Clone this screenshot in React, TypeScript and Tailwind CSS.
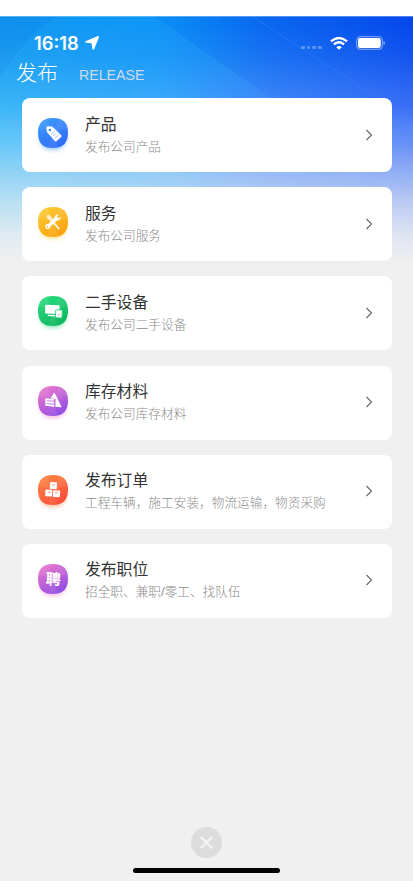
import type { ReactNode } from 'react'

// ── Icon badge: rounded blob with gradient and soft shadow ────────────────────
type BadgeProps = {
  id: string
  from: string
  to: string
  children: ReactNode
}

function Badge({ id, from, to, children }: BadgeProps) {
  return (
    <svg width="46" height="46" viewBox="-8 -6 46 46" className="-m-2 mr-0 shrink-0" aria-hidden>
      <defs>
        <linearGradient id={id} x1="0.2" y1="0" x2="0.8" y2="1">
          <stop offset="0" stopColor={from} />
          <stop offset="1" stopColor={to} />
        </linearGradient>
        <filter id={`${id}-blur`} x="-30%" y="-30%" width="160%" height="160%">
          <feGaussianBlur stdDeviation="2.2" />
        </filter>
      </defs>
      <rect x="2" y="5" width="26" height="27" rx="11" fill={from} opacity="0.5" filter={`url(#${id}-blur)`} />
      <path
        d="M15 0C25 0 30 4.500 30 14.500C30 25 25 30 15 30C5 30 0 25.500 0 14.500C0 4.500 5.500 0 15 0Z"
        fill={`url(#${id})`}
      />
      <path d="M15 15L0.500 10C1.500 5 4 2 9 .6ZM15 15L21 .6C26 1.500 29 4.500 29.800 10ZM15 15L20 29.600C17 30.100 13 30.100 10 29.600Z" fill="#fff" opacity="0.07" />
      {children}
    </svg>
  )
}

const ITEMS = [
  {
    title: '产品',
    desc: '发布公司产品',
    from: '#3d9bfd',
    to: '#2f68f8',
    glyph: (
      <>
        <path d="M9.200 8.300L14.200 8.500L23.500 17.600Q24 18.200 23.400 18.800L18.200 23.400Q17.500 23.900 17 23.200L8.900 13.900L8.400 9.200Z" fill="#fff" />
        <circle cx="11.900" cy="11.900" r="1.250" fill="#3882fa" />
        <path d="M13 16.200L16.800 12.800M14.900 18.200L18.700 14.800M16.800 20.200L20.600 16.800" stroke="#6fa2fb" strokeWidth=".9" strokeDasharray="1.200 .6" />
      </>
    ),
  },
  {
    title: '服务',
    desc: '发布公司服务',
    from: '#fdcd36',
    to: '#fd9e0a',
    glyph: (
      <>
        <path d="M10.700 9.800L13.600 13" stroke="#fff" strokeOpacity=".7" strokeWidth="4" strokeLinecap="round" />
        <path d="M15 15L20.700 21.500" stroke="#fff" strokeWidth="1.700" strokeLinecap="round" />
        <path d="M10 19.500L18.500 11.500" stroke="#fff" strokeWidth="3.400" strokeLinecap="round" />
        <path d="M20.400 7.800A3.600 3.600 0 0 0 16.500 12A3.600 3.600 0 0 0 22.800 10.200L20.300 12L18.300 10.200Z" fill="#fff" stroke="#fff" strokeWidth=".5" />
        <circle cx="9.800" cy="19.600" r="2.500" fill="#fff" />
        <circle cx="9.600" cy="19.800" r=".9" fill="#fdb320" />
      </>
    ),
  },
  {
    title: '二手设备',
    desc: '发布公司二手设备',
    from: '#2bdc80',
    to: '#0db35c',
    glyph: (
      <>
        <path d="M8.200 8.700L20.800 9.200Q21.700 9.300 21.600 10.200L21.200 17.900L8 17.400Q6.900 17.300 7 16.400L7.200 9.600Q7.300 8.700 8.200 8.700Z" fill="#fff" />
        <path d="M10.400 19.400L16.600 19.800" stroke="#fff" strokeWidth="1.400" strokeLinecap="round" />
        <rect x="17.500" y="13.900" width="6.700" height="8" rx="1" fill="#fff" stroke="#1fcb70" strokeWidth=".8" transform="rotate(3 21 18)" />
        <path d="M20 19.500L22 17.400" stroke="#1fcb70" strokeWidth=".7" />
      </>
    ),
  },
  {
    title: '库存材料',
    desc: '发布公司库存材料',
    from: '#ed79cb',
    to: '#8b4be6',
    glyph: (
      <>
        <path d="M15.500 7.300Q16.300 6.400 17 7.500L23.400 20.400Q23.700 21.300 22.800 21.200L17.400 20.700L17.500 13L12.700 12.200Z" fill="#fff" />
        <path d="M7.300 13.200L16 13.900M7.300 16L16.300 16.800M7.300 18.800L16.300 19.700" stroke="#fff" strokeWidth="1.900" />
        <path d="M7.300 14.600L9 14.200M7.300 17.400L9 17" stroke="#fff" strokeWidth="1" />
      </>
    ),
  },
  {
    title: '发布订单',
    desc: '工程车辆，施工安装，物流运输，物资采购',
    from: '#fd8645',
    to: '#fa4937',
    glyph: (
      <>
        <rect x="12" y="7.200" width="6.900" height="6.800" rx=".8" fill="#fff" transform="rotate(3 15 10)" />
        <rect x="7.300" y="14.700" width="6.900" height="6.800" rx=".8" fill="#fff" transform="rotate(3 11 18)" />
        <rect x="15.100" y="15.300" width="6.900" height="6.800" rx=".8" fill="#fff" transform="rotate(3 18 18)" />
        <path d="M14.200 9.800H17M9.500 17.300H12.200M17 17.800H19.800" stroke="#fc6740" strokeWidth=".7" />
      </>
    ),
  },
  {
    title: '发布职位',
    desc: '招全职、兼职/零工、找队伍',
    from: '#ed79cb',
    to: '#8b4be6',
    glyph: (
      <text x="15.200" y="20.600" textAnchor="middle" fontSize="15" fontWeight="700" fill="#fff" transform="rotate(3 15 15)">
        聘
      </text>
    ),
  },
]

// ── Blue header artwork fading into the page ──────────────────────────────────
function Backdrop() {
  return (
    <svg className="absolute inset-x-0 top-0 -z-10 h-[247px] w-full" viewBox="0 0 413 247" preserveAspectRatio="none" aria-hidden>
      <defs>
        <linearGradient id="sky" gradientUnits="userSpaceOnUse" x1="0" y1="60" x2="400" y2="-40">
          <stop offset="0" stopColor="#1090ec" />
          <stop offset="0.38" stopColor="#0a92f6" />
          <stop offset="0.65" stopColor="#0a69f0" />
          <stop offset="1" stopColor="#0748ed" />
        </linearGradient>
        <linearGradient id="tint" x1="0" y1="0" x2="1" y2="0">
          <stop offset="0" stopColor="#4abffa" />
          <stop offset="0.4" stopColor="#4db0fc" />
          <stop offset="0.65" stopColor="#5590fb" />
          <stop offset="1" stopColor="#4a7cf8" />
        </linearGradient>
        <linearGradient id="rise" x1="0" y1="0" x2="0" y2="1">
          <stop offset="0.03" stopColor="#fff" stopOpacity="0" />
          <stop offset="0.16" stopColor="#fff" stopOpacity="0.2" />
          <stop offset="0.33" stopColor="#fff" stopOpacity="0.65" />
          <stop offset="0.48" stopColor="#fff" />
        </linearGradient>
        <mask id="lower">
          <rect width="413" height="247" fill="url(#rise)" />
        </mask>
        <linearGradient id="haze" x1="0" y1="0" x2="0" y2="1">
          <stop offset="0.36" stopColor="#f0f0f0" stopOpacity="0" />
          <stop offset="0.5" stopColor="#f0f0f0" stopOpacity="0.14" />
          <stop offset="0.64" stopColor="#f0f0f0" stopOpacity="0.44" />
          <stop offset="0.75" stopColor="#f0f0f0" stopOpacity="0.66" />
          <stop offset="0.88" stopColor="#f0f0f0" stopOpacity="0.89" />
          <stop offset="1" stopColor="#f0f0f0" />
        </linearGradient>
        <linearGradient id="beam" x1="0" y1="0" x2="1" y2="0">
          <stop offset="0" stopColor="#14a8f8" stopOpacity="0.35" />
          <stop offset="1" stopColor="#1c92fc" stopOpacity="0.45" />
        </linearGradient>
      </defs>
      <rect width="413" height="247" fill="url(#sky)" />
      <path d="M58 0H152L292 98H0V66Q22 24 58 0Z" fill="url(#beam)" />
      <path d="M0 66Q22 24 58 0" fill="none" stroke="#5bbcf8" strokeOpacity="0.2" />
      <path d="M152 0L275 86" stroke="#50b5fb" strokeOpacity="0.25" />
      <path d="M252 0Q310 38 375 80" fill="none" stroke="#50a5fb" strokeOpacity="0.25" />
      <rect width="413" height="247" fill="url(#tint)" mask="url(#lower)" />
      <rect width="413" height="247" fill="url(#haze)" />
      <rect width="413" height="1" fill="#fff" opacity="0.3" />
    </svg>
  )
}

function StatusBar() {
  return (
    <div className="flex h-[40px] items-center pt-[14px] pr-[28px] pl-[34px] text-white">
      <span className="w-[45px] font-[Inter,sans-serif] text-[18.3px] leading-5 font-semibold">16:18</span>
      <svg className="ml-[6px]" width="14" height="14" viewBox="0 0 14 14" fill="currentColor" aria-hidden>
        <path d="M12.400 .2Q14.300-.4 13.900 1.500L9.300 12.800Q8.300 14.700 7.300 12.800L6.700 7.900Q6.600 7.400 6.100 7.300L1.100 6.800Q-.8 6 1 4.900Z" />
      </svg>
      <div className="ml-auto flex items-center">
        <div className="mt-[9px] mr-[8px] flex gap-[2px] opacity-30">
          {[0, 1, 2, 3].map((n) => (
            <span key={n} className="size-[3.8px] rounded-[1px] bg-white" />
          ))}
        </div>
        <svg className="mr-[8px]" width="18" height="13" viewBox="0 0 18 13" fill="none" stroke="currentColor" aria-hidden>
          <path d="M1 4.300Q9-2.300 17 4.300" strokeWidth="2.300" />
          <path d="M3.900 7.400Q9 3.100 14.100 7.400" strokeWidth="2.200" />
          <path d="M9 12.800L6.300 10.200Q9 8 11.700 10.200Z" fill="currentColor" stroke="none" />
        </svg>
        <svg width="29" height="14" viewBox="0 0 29 14" fill="none" aria-hidden>
          <rect x=".6" y=".6" width="25.800" height="12.800" rx="4" stroke="#fff" strokeOpacity="0.42" strokeWidth="1.200" />
          <rect x="2" y="2" width="22.800" height="10" rx="2.200" fill="#fff" />
          <path d="M27.500 5Q29 5.500 29 7T27.500 9Z" fill="#fff" opacity="0.5" />
        </svg>
      </div>
    </div>
  )
}

// ── Page ──────────────────────────────────────────────────────────────────────
export default function App() {
  return (
    <div className="h-[896px] bg-white pt-4 font-['Liberation_Sans','Noto_Sans_CJK_SC',sans-serif]">
      <div className="relative isolate flex h-[865px] flex-col overflow-hidden bg-[#f0f0f0]">
        <Backdrop />
        <StatusBar />

        <header className="flex h-[42px] items-center gap-[21px] pl-4">
          <h1 className="-mt-[10px] text-[21px] leading-none font-light text-white">发布</h1>
          <span className="-mt-[4px] text-[14.2px] leading-none text-[#cfdbea]">RELEASE</span>
        </header>

        <main className="flex flex-col gap-[15.2px] px-[21.5px]">
          {ITEMS.map((item, i) => (
            <button key={item.title} className="flex h-[74px] items-center rounded-[8px] bg-white pr-[18px] pl-[16.5px] text-left">
              <Badge id={`badge-${i}`} from={item.from} to={item.to}>
                {item.glyph}
              </Badge>
              <span className="ml-[9px] flex grow flex-col pt-px">
                <span className="text-[15.8px] leading-[22px] text-[#333]">{item.title}</span>
                <span className="text-[12.68px] leading-[22px] font-light whitespace-nowrap text-[#8c8c8c]">{item.desc}</span>
              </span>
              <svg className="-mt-px" width="10" height="12" viewBox="0 0 10 12" fill="none" stroke="#666" strokeWidth="1.100" aria-hidden>
                <path d="M2.500 1L7.500 6L2.500 11" />
              </svg>
            </button>
          ))}
        </main>

        <footer className="mt-auto flex flex-col items-center pb-[8px]">
          <button aria-label="关闭" className="flex size-[31px] items-center justify-center rounded-full bg-[#dcdcdc]">
            <svg width="13" height="13" viewBox="0 0 13 13" stroke="#f4f4f4" strokeWidth="2.300" strokeLinecap="round" aria-hidden>
              <path d="M1.500 1.500L11.500 11.500M11.500 1.500L1.500 11.500" />
            </svg>
          </button>
          <span className="mt-[10px] h-[5px] w-[147px] rounded-full bg-black" />
        </footer>
      </div>
    </div>
  )
}
